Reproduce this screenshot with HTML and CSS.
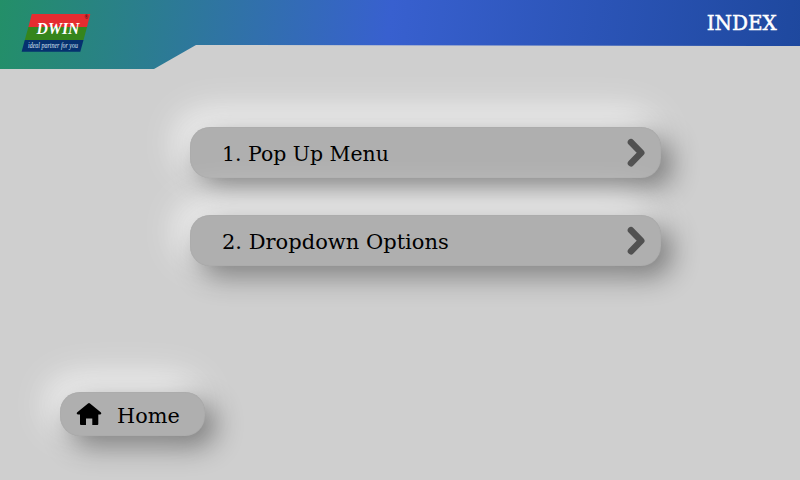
FILE: index.html
```html
<!DOCTYPE html>
<html lang="en">
<head>
<meta charset="utf-8">
<title>Index</title>
<link rel="stylesheet" href="styles.css">
</head>
<body>
<header class="header">
  <svg class="logo" width="70" height="40" viewBox="0 0 70 40" role="img" aria-label="DWIN">
    <path fill="#e52c30" d="M10.8 1H69.3L66 14H7.4z"/>
    <path fill="#35851c" d="M7.4 14H66L62.5 27H3.8z"/>
    <path fill="#05316f" d="M3.8 27H62.5L59.3 38.8H.6z"/>
    <text class="brand" x="15.5" y="20.5" textLength="43" lengthAdjust="spacingAndGlyphs">DWIN</text>
    <text class="tagline" x="7" y="34.5" textLength="50" lengthAdjust="spacingAndGlyphs">ideal partner for you</text>
    <text class="mark" x="63.4" y="6.3">®</text>
  </svg>
  <h1 class="title">INDEX</h1>
</header>
<main class="main">
  <nav class="menu">
    <a class="button option"><span class="label popup">1. Pop Up Menu</span>
      <svg class="arrow" width="20" height="30" viewBox="0 0 20 30"><path d="M4 4.2 14.2 14.7 4 25.2"/></svg></a>
    <a class="button option"><span class="label dropdown">2. Dropdown Options</span>
      <svg class="arrow" width="20" height="30" viewBox="0 0 20 30"><path d="M4 4.2 14.2 14.7 4 25.2"/></svg></a>
  </nav>
  <a class="button home">
    <svg class="house" width="26" height="24" viewBox="0 0 26 24"><path d="M12 1.4Q13 .6 14 1.4L25 10.5Q26 12 24.3 12.5H22.3V22Q22.3 23 21.3 23H16.3V16.6H10V23H5Q4 23 4 22V12.5H1.8Q0 12 1 10.5z"/></svg>
    <span class="label home-label">Home</span></a>
</main>
</body>
</html>
```
FILE: styles.css
```css
* { box-sizing: border-box; }
body {
  margin: 0;
  width: 800px;
  height: 480px;
  overflow: hidden;
  background: #cfcfcf;
  font-family: "DejaVu Serif", serif;
}
.header {
  display: flex;
  justify-content: space-between;
  align-items: flex-start;
  height: 69px;
  padding: 13px 23px 0 21px;
  background: linear-gradient(97deg, #238f68 0, #3860cf 48.5%, #1e489e 100%);
  clip-path: polygon(0 0, 100% 0, 100% 46px, 196px 45px, 154px 69px, 0 69px);
}
.logo { display: block; }
.brand {
  fill: #fff;
  font: italic bold 17px "Liberation Serif", serif;
}
.tagline {
  fill: #dce5f2;
  font: italic 7.5px "Liberation Serif", serif;
}
.mark {
  fill: #52151b;
  font: bold 5px "Liberation Sans", sans-serif;
}
.title {
  margin: -3px 0 0;
  color: #fff;
  font-size: 21px;
  font-weight: 400;
  line-height: 26px;
  -webkit-text-stroke: .5px #fff;
  transform: scaleX(.95);
  transform-origin: right;
}
.main { padding: 58px 0 0 60px; }
.menu {
  display: grid;
  gap: 37px;
  width: 471px;
  margin: 0 0 126px 130px;
}
.button {
  display: flex;
  align-items: center;
  background: #afafaf;
  border-radius: 20px;
  box-shadow:
    inset 0 0 1px #999,
    10px 10px 28px rgba(0, 0, 0, .44),
    -10px -10px 30px rgba(255, 255, 255, .45),
    -8px -10px 45px rgba(255, 255, 255, .75);
}
.option {
  justify-content: space-between;
  height: 51px;
  padding: 0 14px 0 32px;
}
.label {
  padding-top: 3px;
  color: #000;
  font-size: 20.6px;
  line-height: 26px;
  white-space: nowrap;
  transform-origin: left;
}
.popup { transform: scaleX(.992); }
.dropdown { transform: scaleX(1.02); }
.home-label { transform: scaleX(1.01); }
.arrow path {
  fill: none;
  stroke: #515151;
  stroke-width: 6.6;
  stroke-linecap: round;
  stroke-linejoin: round;
}
.home {
  width: 145px;
  height: 44px;
  padding-left: 16px;
  gap: 15px;
}
.house { fill: #000; }
```
